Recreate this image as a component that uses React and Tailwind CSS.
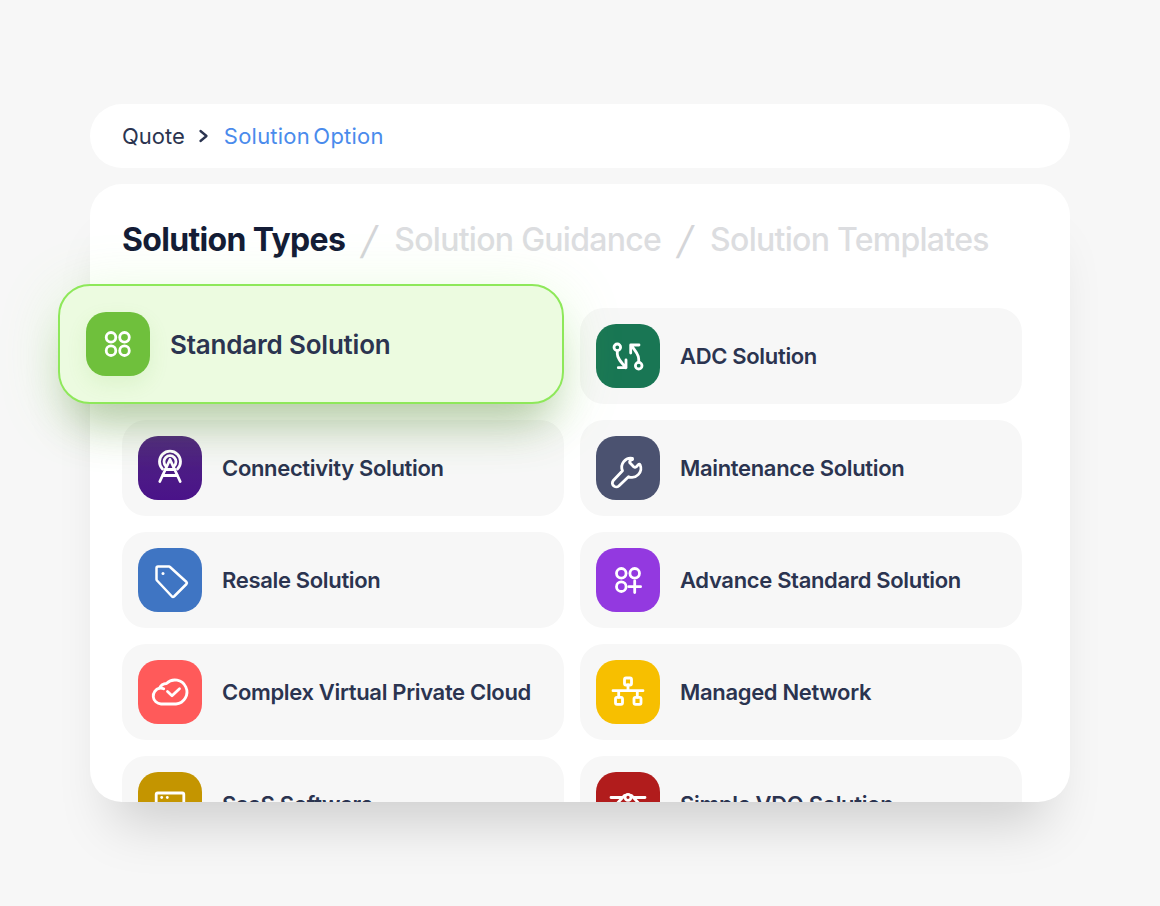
// all icons are drawn on the 64x64 tile so the coordinates line up with the tile
function TileIcon({ children }) {
  return (
    <svg width="64" height="64" viewBox="0 0 64 64" fill="none" stroke="white" strokeWidth="2.800" strokeLinecap="round" strokeLinejoin="round">
      {children}
    </svg>
  );
}

const icons = {
  grid: (
    <TileIcon>
      <circle cx="25" cy="25.300" r="4.800" />
      <circle cx="38.500" cy="25.300" r="4.800" />
      <circle cx="25" cy="38.700" r="4.800" />
      <circle cx="38.500" cy="38.700" r="4.800" />
    </TileIcon>
  ),
  gridPlus: (
    <TileIcon>
      <circle cx="25.300" cy="25.300" r="4.800" />
      <circle cx="38.700" cy="25.300" r="4.800" />
      <circle cx="25.300" cy="38.700" r="4.800" />
      <path d="M38.700 32.800v11.800M32.800 38.700h11.800" />
    </TileIcon>
  ),
  adc: (
    <TileIcon>
      <circle cx="21.300" cy="23.300" r="3.300" />
      <path d="M21.300 27v3c0 4 3 7.500 8.700 13.700M22.300 43.700H30V36" />
      <circle cx="42.700" cy="41.700" r="3.300" />
      <path d="M42.700 38v-3c0-4-2.700-8-8-14M34.700 29v-8H43" />
    </TileIcon>
  ),
  tower: (
    <TileIcon>
      <path d="M24.500 33A10.500 10.500 0 1 1 39.500 33" />
      <path d="M27.800 30A6 6 0 1 1 36.200 30" />
      <path d="M32 23.500L21.800 45.500M32 23.500L42.200 45.500M27 33.500h10M24.500 39.500h15" />
    </TileIcon>
  ),
  wrench: (
    <TileIcon>
      <path d="M36.500 22.500l-2.400 2.400a1.500 1.500 0 0 0 0 2.200l3.800 3.800a1.500 1.500 0 0 0 2.200 0l2.400-2.400a1 1 0 0 1 1.600.3 9 9 0 0 1-11.600 11.900L22.800 50a3.900 3.900 0 0 1-5.500-5.500l9.200-9.700a9 9 0 0 1 9.900-12.400 1 1 0 0 1 .1 1.200z" />
    </TileIcon>
  ),
  tag: (
    <TileIcon>
      <path d="M20 18.500h11a1.500 1.500 0 0 1 1 .5l16.500 15a1.500 1.500 0 0 1 0 2L36 48.500a1.500 1.500 0 0 1-2 0L19 32.500a1.500 1.500 0 0 1-.5-1V20a1.500 1.500 0 0 1 1.500-1.500z" strokeWidth="2.500" />
      <circle cx="25" cy="25.500" r="1.500" fill="white" stroke="none" />
    </TileIcon>
  ),
  cloud: (
    <TileIcon>
      <path d="M23 44a8 8 0 0 1-1.500-15.800A8 8 0 0 1 28.500 23.500 12 12 0 1 1 38 44z" />
      <path d="M21.500 28.200c1.500-.2 3 0 4.200.6" />
      <path d="M29.500 31.500l4.500 4.200 7.500-7" />
    </TileIcon>
  ),
  network: (
    <TileIcon>
      <rect x="28.500" y="18" width="7" height="7" rx="1.500" />
      <rect x="19.500" y="37.300" width="7" height="7" rx="1.500" />
      <rect x="38" y="37.300" width="7" height="7" rx="1.500" />
      <path d="M32 25v5.700M17 30.700h30M22.700 30.700v6.600M41.300 30.700v6.600" />
    </TileIcon>
  ),
  browser: (
    <TileIcon>
      <rect x="18.200" y="21" width="27.600" height="22" rx="1.500" />
      <circle cx="23.700" cy="25.500" r="1.400" fill="white" stroke="none" />
      <circle cx="29.300" cy="25.500" r="1.400" fill="white" stroke="none" />
    </TileIcon>
  ),
  vdo: (
    <TileIcon>
      <path d="M15 25.500h11.500M37.500 25.500H49M21.500 31l7-7.500M42.500 31l-7-7.500" />
      <circle cx="32" cy="25.300" r="3" />
    </TileIcon>
  ),
};

const items = [
  null,
  { name: "ADC Solution", color: "bg-[#197654]", icon: icons.adc },
  { name: "Connectivity Solution", color: "bg-gradient-to-b from-[#502481] to-[#4a1289]", icon: icons.tower },
  { name: "Maintenance Solution", color: "bg-[#4b5270]", icon: icons.wrench },
  { name: "Resale Solution", color: "bg-[#3f75c3]", icon: icons.tag },
  { name: "Advance Standard Solution", color: "bg-[#9339e0]", icon: icons.gridPlus },
  { name: "Complex Virtual Private Cloud", color: "bg-[#ff5a5a]", icon: icons.cloud },
  { name: "Managed Network", color: "bg-[#f7bf00]", icon: icons.network },
  { name: "SaaS Software", color: "bg-[#c49500]", icon: icons.browser },
  { name: "Simple VDO Solution", color: "bg-[#b11c1c]", icon: icons.vdo },
];

function Item({ item }) {
  return (
    <div className="flex h-24 items-center gap-5 rounded-3xl bg-[#f7f7f7] p-4">
      <div className={`h-16 w-16 shrink-0 rounded-[20px] ${item.color}`}>{item.icon}</div>
      <span className="text-[22px] font-[640] tracking-[-0.33px] text-[#2b3450]">{item.name}</span>
    </div>
  );
}

function Slash() {
  return <span className="w-[49px] text-center text-[38px] font-normal leading-[46px] tracking-normal text-[#d4d5d8] -skew-x-12">/</span>;
}

export default function App() {
  return (
    <div className="h-[906px] w-[1160px] overflow-hidden bg-[#f7f7f7] pt-[104px] pl-[90px] font-['Inter',sans-serif]">
      <div className="flex h-16 w-[980px] items-center rounded-[32px] bg-white px-8 text-[22px]">
        <span className="text-[#2b3450]">Quote</span>
        <svg width="12" height="16" viewBox="0 0 12 16" fill="none" stroke="#2b3450" strokeWidth="2.300" strokeLinecap="round" strokeLinejoin="round" className="mx-[13.500px]">
          <path d="M2.500 3l6 5-6 5" />
        </svg>
        <span className="tracking-[0.22px] text-[#4a8bec] [word-spacing:-3px]">Solution Option</span>
      </div>

      <div className="relative mt-4 h-[618px] w-[980px] rounded-[32px] bg-white shadow-[0_44px_54px_-24px_rgba(0,0,0,0.17)]">
        <div className="h-full overflow-hidden rounded-[32px] px-8">
          <div className="flex h-[124px] items-start pt-[33px] text-[32px] font-medium leading-[46px] tracking-[-0.72px] text-[#dcdde0]">
            <span className="font-[660] tracking-[-0.66px] text-[#141c36]">Solution Types</span>
            <Slash />
            <span>Solution Guidance</span>
            <Slash />
            <span>Solution Templates</span>
          </div>
          <div className="grid w-[900px] grid-cols-2 gap-4">
            {items.map((item, i) =>
              item ? <Item key={item.name} item={item} /> : <div key={i} className="h-24" />
            )}
          </div>
        </div>

        <div className="absolute left-[-32px] top-[100px] flex h-[120px] w-[506px] items-center gap-5 rounded-[32px] border-2 border-[#8ee85a] bg-[#ecfbe0] pl-[26px] shadow-[0_34px_44px_-14px_rgba(50,90,20,0.3),0_10px_60px_rgba(140,240,90,0.22)]">
          <div className="h-16 w-16 shrink-0 rounded-[20px] bg-[#6fc03c] shadow-[0_8px_20px_rgba(110,190,60,0.12)]">{icons.grid}</div>
          <span className="text-[26px] font-[640] tracking-[-0.2px] text-[#2b3450]">Standard Solution</span>
        </div>
      </div>
    </div>
  );
}
